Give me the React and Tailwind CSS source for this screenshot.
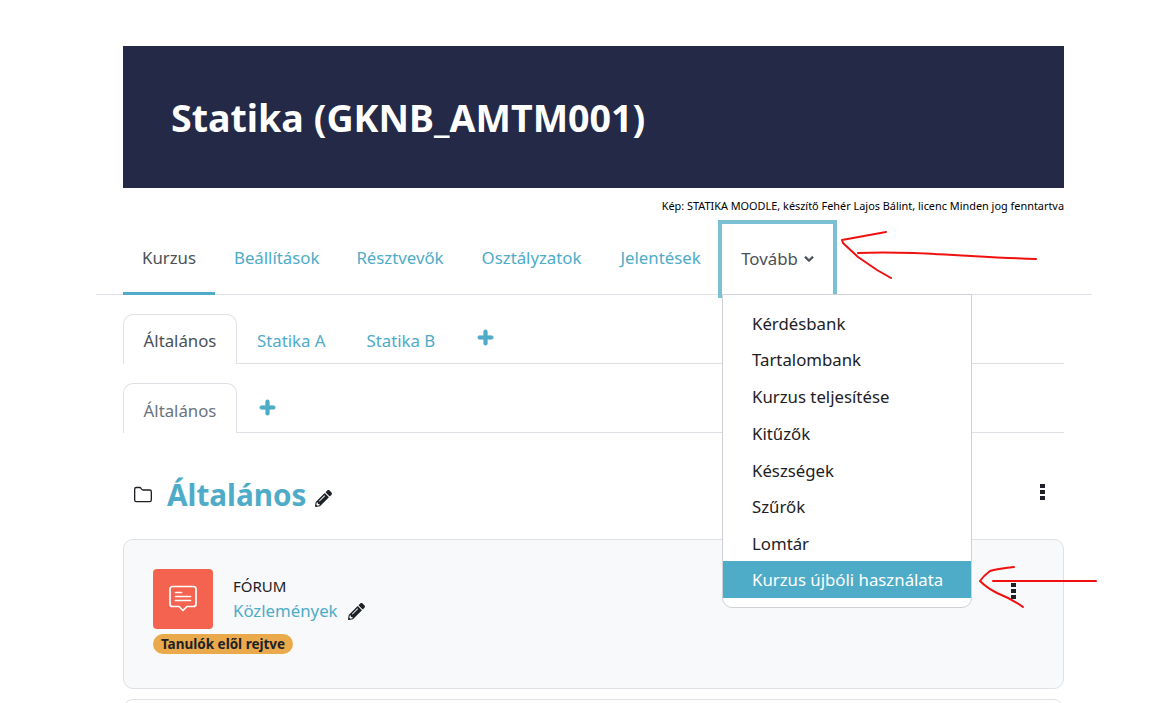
import { Folder } from 'lucide-react';
import { FaPencilAlt, FaPlus, FaChevronDown } from 'react-icons/fa';

const font = "font-['Noto_Sans','Open_Sans',sans-serif]";

const menuItems = ['Kérdésbank', 'Tartalombank', 'Kurzus teljesítése', 'Kitűzők', 'Készségek', 'Szűrők', 'Lomtár'];

const Dots = () => (
    <div className="flex flex-col gap-[2px] w-[5px]">
        <span className="w-[5px] h-[4px] bg-[#1d2125]" />
        <span className="w-[5px] h-[4px] bg-[#1d2125]" />
        <span className="w-[5px] h-[4px] bg-[#1d2125]" />
    </div>
);

const App = () => {
    return (
        <div className={`relative h-[703px] overflow-hidden bg-white text-[#1d2125] ${font}`}>
            <div className="pl-[96px] pr-[71px] pt-[46px]">
                {/* Course header */}
                <div className="ml-[27px] mr-[28px]">
                    <div className="h-[142px] bg-[#232946] flex items-center pl-[48px]">
                        <h1 className="text-[37.6px] font-bold text-white leading-none pt-[2px]">Statika (GKNB_AMTM001)</h1>
                    </div>
                    <div className="h-[32px] flex items-center justify-end text-[10.9px] text-black pt-[4px]">
                        Kép: STATIKA MOODLE, készítő Fehér Lajos Bálint, licenc Minden jog fenntartva
                    </div>
                </div>

                {/* Course nav */}
                <div className="h-[75px] border-b border-[#dee2e6] px-[27px] flex text-[16.8px] text-[#4eacc8]">
                    <div className="w-[92px] flex items-center justify-center text-[#495057] border-b-[3px] border-[#4eacc8] h-[75px] pt-[3px]">Kurzus</div>
                    <div className="ml-[19px] flex items-center pt-[2px]">Beállítások</div>
                    <div className="ml-[37px] flex items-center pt-[2px]">Résztvevők</div>
                    <div className="ml-[38px] flex items-center pt-[2px]">Osztályzatok</div>
                    <div className="ml-[39px] flex items-center pt-[2px]">Jelentések</div>
                </div>

                {/* Section tabs */}
                <div className="ml-[27px] mr-[28px]">
                    <div className="mt-[19px] h-[50px] border-b border-[#dee2e6] flex text-[16.8px] text-[#4eacc8]">
                        <div className="w-[114px] h-[50px] border border-b-0 border-[#dee2e6] rounded-t-[10px] bg-white flex items-center justify-center pt-[2px] text-[#495057]">Általános</div>
                        <div className="ml-[20px] flex items-center pt-[4px]">Statika A</div>
                        <div className="ml-[41px] flex items-center pt-[4px]">Statika B</div>
                        <div className="ml-[42px] flex items-center pb-[3px]"><FaPlus size={17} stroke="currentColor" strokeWidth={30} /></div>
                    </div>
                    <div className="mt-[19px] h-[50px] border-b border-[#dee2e6] flex text-[16.8px]">
                        <div className="w-[114px] h-[50px] border border-b-0 border-[#dee2e6] rounded-t-[10px] bg-white flex items-center justify-center pt-[4px] text-[#6a737b]">Általános</div>
                        <div className="ml-[22px] flex items-center pb-[1px] text-[#4eacc8]"><FaPlus size={17} stroke="currentColor" strokeWidth={30} /></div>
                    </div>

                    {/* Section title */}
                    <div className="mt-[37px] h-[50px] flex items-center">
                        <Folder size={20} strokeWidth={1.6} className="ml-[10px] text-[#1d2125]" />
                        <h2 className="ml-[14px] text-[29.7px] font-bold text-[#4eacc8] leading-none">Általános</h2>
                        <FaPencilAlt size={17} className="ml-[9px] mt-[6px] text-[#1d2125]" />
                        <div className="ml-auto mr-[19px] mb-[6px]"><Dots /></div>
                    </div>

                    {/* Forum card */}
                    <div className="mt-[19px] h-[150px] border border-[#dee2e6] rounded-[10px] bg-[#f8f9fa] pl-[29px] pt-[29px] relative">
                        <div className="flex">
                            <div className="w-[60px] h-[60px] rounded-[4px] bg-[#f4634f] flex items-center justify-center">
                                <svg width="30" height="30" viewBox="0 0 30 30" fill="none" stroke="white" strokeWidth="1.7" strokeLinecap="round" strokeLinejoin="round">
                                    <path d="M4.500 2.500h21a2.500 2.500 0 0 1 2.500 2.500v15a2.500 2.500 0 0 1-2.500 2.500h-6.500l-4 4-4-4H4.500A2.500 2.500 0 0 1 2 20V5a2.500 2.500 0 0 1 2.500-2.500z" />
                                    <path d="M7.500 8.500h6M7.500 12.500h15M7.500 16.500h15" />
                                </svg>
                            </div>
                            <div className="ml-[20px] pt-[7px]">
                                <div className="text-[15px] leading-[20px] text-[#1d2125]">FÓRUM</div>
                                <div className="flex items-center text-[16.8px] leading-[30px] text-[#4eacc8]">
                                    Közlemények
                                    <FaPencilAlt size={17} className="ml-[10px] text-[#1d2125]" />
                                </div>
                            </div>
                        </div>
                        <div className="mt-[5px] w-[140px] h-[20px] rounded-full bg-[#eaa94b] flex items-center justify-center text-[13.5px] font-bold text-[#1d2125]">
                            Tanulók elől rejtve
                        </div>
                        <div className="absolute right-[47px] top-[43px]"><Dots /></div>
                    </div>
                    <div className="mt-[10px] h-[40px] border border-[#dee2e6] rounded-[10px] bg-white" />
                </div>
            </div>

            {/* "Tovább" tab with highlight drawn on top */}
            <div className="absolute left-[718px] top-[220px] w-[119px] h-[78px] border-[4px] border-[#7bc0d5] border-b-0 bg-white flex items-center justify-center gap-[6px] pb-[5px] text-[16.8px] text-[#495057]">
                Tovább
                <FaChevronDown size={10} stroke="currentColor" strokeWidth={40} />
            </div>

            {/* Dropdown menu */}
            <div className="absolute left-[722px] top-[294px] w-[250px] h-[314px] bg-white border border-[#ced2d6] rounded-b-[10px] pt-[10px] text-[16.8px] text-[#1d2125]">
                {menuItems.map(item => (
                    <div key={item} className="h-[36.7px] flex items-center pl-[29px]">{item}</div>
                ))}
                <div className="-mt-[1px] h-[36.7px] flex items-center pl-[29px] bg-[#4eacc8] text-white">Kurzus újbóli használata</div>
            </div>

            {/* Red annotation arrows */}
            <svg className="absolute left-0 top-0 pointer-events-none" width="1163" height="703" fill="none" stroke="#f01010" strokeWidth="2" strokeLinecap="round" strokeLinejoin="round">
                <path d="M886 232L842 240L843 243L858 257L877 270L891 278" />
                <path d="M858 253C880 252 913 253 913 253C960 255 1000 258 1036 259" />
                <path d="M1014 567C1005 568 996 569 990 571C986 574 982 578 980 581C985 586 991 590 997 593C1007 597 1016 602 1023 607" />
                <path d="M993 581H1096" />
            </svg>
        </div>
    );
};

export default App;
